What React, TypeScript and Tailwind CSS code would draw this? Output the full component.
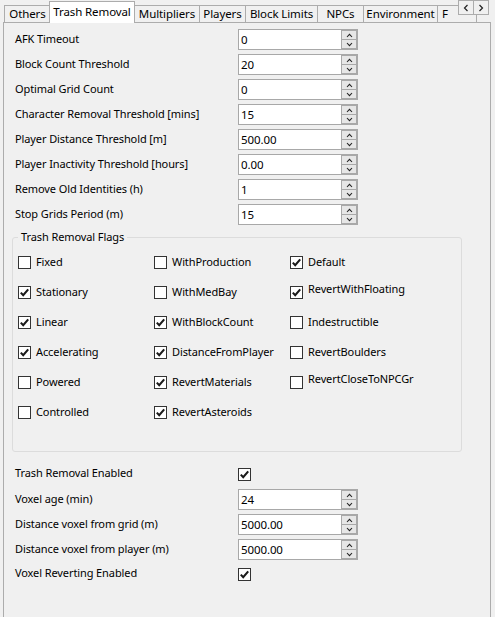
import React from "react";

const font = { fontFamily: '"Noto Sans", "Open Sans", sans-serif' };

function Check({ on }: { on: boolean }) {
  return (
    <div className="w-[13px] h-[13px] shrink-0 border border-[#333333] bg-white flex items-center justify-center">
      {on && (
        <svg width="11" height="11" viewBox="0 0 11 11">
          <path d="M1.8 5.6 L4.2 8.2 L9.2 2.4" fill="none" stroke="#1a1a1a" strokeWidth="2.1" />
        </svg>
      )}
    </div>
  );
}

function Spin({ value }: { value: string }) {
  return (
    <div className="w-[120px] h-[21px] flex border border-[#a8a8a8] bg-white">
      <div className="flex-1 pl-[2px] leading-[19px] text-[11.5px] text-black">{value}</div>
      <div className="w-[16px] flex flex-col border-l border-[#a8a8a8] bg-[#a8a8a8] gap-[1px] p-[1px] pl-0">
        <div className="flex-1 bg-[#e6e6e6] flex items-center justify-center">
          <svg width="7" height="5" viewBox="0 0 7 5">
            <path d="M1 4 L3.5 1.3 L6 4" fill="none" stroke="#222" strokeWidth="1.1" />
          </svg>
        </div>
        <div className="flex-1 bg-[#e6e6e6] flex items-center justify-center">
          <svg width="7" height="5" viewBox="0 0 7 5">
            <path d="M1 1 L3.5 3.7 L6 1" fill="none" stroke="#222" strokeWidth="1.1" />
          </svg>
        </div>
      </div>
    </div>
  );
}

const rows1: [string, string][] = [
  ["AFK Timeout", "0"],
  ["Block Count Threshold", "20"],
  ["Optimal Grid Count", "0"],
  ["Character Removal Threshold [mins]", "15"],
  ["Player Distance Threshold [m]", "500.00"],
  ["Player Inactivity Threshold [hours]", "0.00"],
  ["Remove Old Identities (h)", "1"],
  ["Stop Grids Period (m)", "15"],
];

type Flag = [string, boolean, boolean?];
const flags: (Flag | null)[][] = [
  [["Fixed", false], ["WithProduction", false], ["Default", true]],
  [["Stationary", true], ["WithMedBay", false], ["RevertWithFloating", true, true]],
  [["Linear", true], ["WithBlockCount", true], ["Indestructible", false]],
  [["Accelerating", true], ["DistanceFromPlayer", true], ["RevertBoulders", false]],
  [["Powered", false], ["RevertMaterials", true], ["RevertCloseToNPCGr", false, true]],
  [["Controlled", false], ["RevertAsteroids", true], null],
];

const tabs: [string, number][] = [
  ["Others", 47],
  ["Trash Removal", 86],
  ["Multipliers", 66],
  ["Players", 47],
  ["Block Limits", 73],
  ["NPCs", 47],
  ["Environment", 75],
  ["F", 40],
];

export default function App() {
  return (
    <div
      className="w-[495px] h-[617px] bg-[#f0f0f0] overflow-hidden relative text-[11px] tracking-[-0.1px] text-black"
      style={font}
    >
      {/* tab strip */}
      <div className="h-[22px] flex items-end pl-[4px] relative">
        {tabs.map(([t, w]) =>
          t === "Trash Removal" ? (
            <div
              key={t}
              style={{ width: w }}
              className="h-[22px] -mb-[1px] -mx-[1px] bg-white border border-b-0 border-[#acacac] z-10 text-center leading-[19px] shrink-0 text-[11.5px]"
            >
              {t}
            </div>
          ) : t === "F" ? (
            <div
              key={t}
              style={{ width: w }}
              className="h-[17px] bg-[#f0f0f0] border border-b-0 border-[#acacac] leading-[15px] shrink-0 pl-[4px] text-[11.5px]"
            >
              {t}
            </div>
          ) : (
            <div
              key={t}
              style={{ width: w }}
              className="h-[17px] bg-[#f0f0f0] border border-b-0 border-[#acacac] text-center leading-[15px] shrink-0 -mr-[1px] whitespace-nowrap text-[11.5px]"
            >
              {t}
            </div>
          )
        )}
        <div className="absolute left-[458px] top-[0px] flex z-20 bg-[#f0f0f0]">
          <div className="w-[16px] h-[15px] border border-[#acacac] bg-[#f0f0f0] flex items-center justify-center">
            <svg width="6" height="8" viewBox="0 0 6 8">
              <path d="M4.5 1 L1.5 4 L4.5 7" fill="none" stroke="#222" strokeWidth="1.2" />
            </svg>
          </div>
          <div className="w-[16px] h-[15px] -ml-[1px] border border-[#acacac] bg-[#f0f0f0] flex items-center justify-center">
            <svg width="6" height="8" viewBox="0 0 6 8">
              <path d="M1.5 1 L4.5 4 L1.5 7" fill="none" stroke="#222" strokeWidth="1.2" />
            </svg>
          </div>
        </div>
      </div>

      {/* panel */}
      <div className="ml-[3px] w-[488px] h-[620px] border border-[#acacac] bg-[#f0f0f0] pt-[4px] pl-[11px] relative">
        <div className="grid grid-cols-[223px_120px]">
          {rows1.map(([l, v]) => (
            <React.Fragment key={l}>
              <div className="h-[25px] flex items-center">{l}</div>
              <div className="h-[25px] flex items-center">
                <Spin value={v} />
              </div>
            </React.Fragment>
          ))}
        </div>

        {/* group box */}
        <div className="relative mt-[10px] -ml-[3px] w-[450px] h-[215px] border border-[#dcdcdc] rounded-[3px] pl-[5px] pt-[9px]">
          <div className="absolute -top-[9px] left-[5px] px-[3px] bg-[#f0f0f0] leading-[16px]">Trash Removal Flags</div>
          <div className="grid grid-cols-[136px_136px_136px]">
            {flags.map((row, i) =>
              row.map((f, j) =>
                f ? (
                  <div key={`${i}-${j}`} className="h-[30px] flex items-center gap-[5px]">
                    <Check on={f[1]} />
                    <span className={f[2] ? "mb-[6px] whitespace-nowrap" : "whitespace-nowrap"}>{f[0]}</span>
                  </div>
                ) : (
                  <div key={`${i}-${j}`} className="h-[30px]" />
                )
              )
            )}
          </div>
        </div>

        <div className="grid grid-cols-[223px_120px] mt-[10px]">
          <div className="h-[25px] flex items-center pb-[2px]">Trash Removal Enabled</div>
          <div className="h-[25px] flex items-center pb-[1px]">
            <Check on={true} />
          </div>
          <div className="h-[25px] flex items-center">Voxel age (min)</div>
          <div className="h-[25px] flex items-center">
            <Spin value="24" />
          </div>
          <div className="h-[25px] flex items-center">Distance voxel from grid (m)</div>
          <div className="h-[25px] flex items-center">
            <Spin value="5000.00" />
          </div>
          <div className="h-[25px] flex items-center">Distance voxel from player (m)</div>
          <div className="h-[25px] flex items-center">
            <Spin value="5000.00" />
          </div>
          <div className="h-[25px] flex items-center pb-[2px]">Voxel Reverting Enabled</div>
          <div className="h-[25px] flex items-center pb-[1px]">
            <Check on={true} />
          </div>
        </div>
      </div>
    </div>
  );
}
